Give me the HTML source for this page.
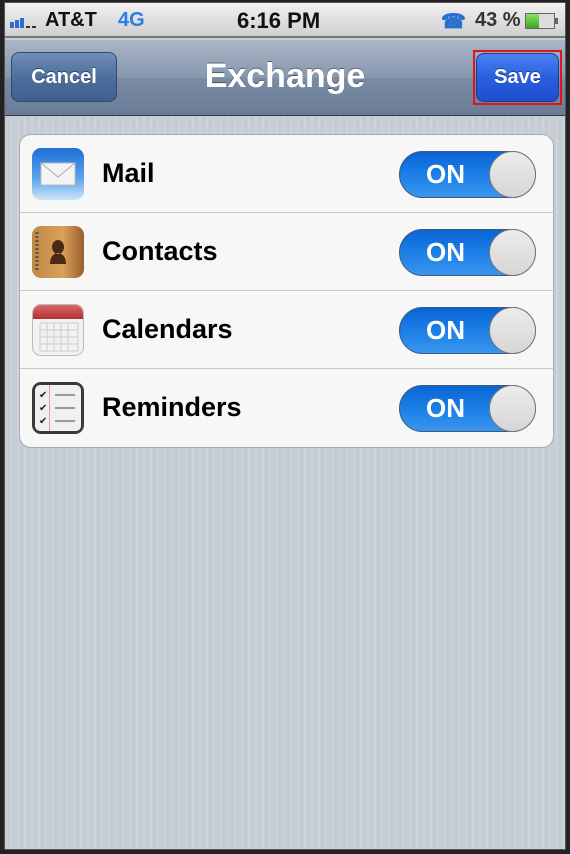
<!DOCTYPE html>
<html><head><style>
*{margin:0;padding:0;box-sizing:border-box}
body{width:570px;height:854px;background:#222;position:relative;overflow:hidden;font-family:"Liberation Sans",sans-serif}
#scr{position:absolute;left:4px;top:2px;width:562px;height:848px;background:repeating-linear-gradient(90deg,#c5ccd4 0 5px,#cbd2d9 5px 7px);border:1px solid #555}
#sb{position:absolute;left:0;top:0;width:100%;height:35px;background:linear-gradient(#f0f0f0,#d0d0d0);border-bottom:2px solid #777;font-weight:bold;font-size:20px;color:#111}
#nav{position:absolute;left:0;top:37px;width:100%;height:76px;background:linear-gradient(#aab6c6,#8797ae 50%,#7a8ca5 51%,#6a7c96);border-bottom:1px solid #2d3642}
.btn{position:absolute;top:12px;height:50px;border-radius:8px;color:#fff;font-weight:bold;font-size:20px;display:flex;align-items:center;justify-content:center;text-shadow:0 -1px 0 rgba(0,0,0,.4)}
#grp{position:absolute;left:14px;top:131px;width:535px;height:314px;background:#f7f7f7;border:1px solid #a9abad;border-radius:12px;overflow:hidden}
.row{height:78px;border-bottom:1px solid #c8c8c8;position:relative}
.row:last-child{border-bottom:none}
.row span{position:absolute;left:82px;top:23px;font-size:27px;font-weight:bold;color:#000}
.ic{position:absolute;left:12px;top:13px;width:52px;height:52px;border-radius:9px;overflow:hidden}
.tg{position:absolute;left:379px;top:16px;width:137px;height:47px;border-radius:24px;background:linear-gradient(#0a64d4,#1b7fe6 50%,#3a95ef);border:1px solid #3a5a80}
.tg b{position:absolute;left:26px;top:7px;color:#fff;font-size:26px}
.tg i{position:absolute;right:-1px;top:-1px;width:47px;height:47px;border-radius:50%;background:linear-gradient(#ececec,#d6d6d6);border:1px solid #777}
</style></head><body>
<div id="scr">
<div id="sb">
 <svg style="position:absolute;left:5px;top:12px" width="36" height="14"><rect x="0" y="7" width="4" height="6" fill="#2a6fd0"/><rect x="5" y="5" width="4" height="8" fill="#2a6fd0"/><rect x="10" y="3" width="4" height="10" fill="#2a6fd0"/><rect x="16" y="11" width="4" height="2" fill="#333"/><rect x="22" y="11" width="4" height="2" fill="#333"/></svg>
 <span style="position:absolute;left:40px;top:6px">AT&amp;T</span>
 <span style="position:absolute;left:113px;top:6px;color:#2a7ee8">4G</span>
 <span style="position:absolute;left:232px;top:5px;font-size:22px">6:16 PM</span>
 <span style="position:absolute;left:436px;top:6px;color:#2a6fd0">☎</span>
 <span style="position:absolute;left:470px;top:6px;color:#333">43 %</span>
 <div style="position:absolute;left:520px;top:10px;width:30px;height:16px;border:1px solid #666;background:#ddd"><div style="width:13px;height:100%;background:linear-gradient(#8be06a,#3ca81c)"></div></div>
 <div style="position:absolute;left:550px;top:15px;width:3px;height:6px;background:#666"></div>
</div>
<div id="nav">
 <div class="btn" style="left:6px;width:106px;background:linear-gradient(#6f8fb8,#4e6e9c 50%,#3f5f8f);border:1px solid #34496b">Cancel</div>
 <div style="position:absolute;left:0;width:100%;top:17px;text-align:center;color:#fff;font-weight:bold;font-size:34px;text-shadow:0 -1px 0 rgba(0,0,0,.4)">Exchange</div>
 <div style="position:absolute;left:468px;top:10px;width:89px;height:55px;border:2px solid #e0141c"></div>
 <div class="btn" style="left:471px;top:13px;width:83px;height:49px;background:linear-gradient(#4a82f0,#2a5fdc 50%,#1d4fce);border:1px solid #1c3c8a">Save</div>
</div>
<div id="grp">
 <div class="row"><div class="ic" style="background:linear-gradient(#1d6fd6,#5ea6ec 60%,#cfe6f8)"><svg width="52" height="52"><rect x="9" y="15" width="34" height="22" fill="#f4f4f4" stroke="#bbb"/><path d="M9 15 L26 29 L43 15" fill="none" stroke="#aaa"/></svg></div><span>Mail</span><div class="tg"><b>ON</b><i></i></div></div>
 <div class="row"><div class="ic" style="background:linear-gradient(90deg,#c08844,#d9a159 60%,#9a5e2c)"><svg width="52" height="52"><path d="M18 38 Q18 28 26 27 Q34 28 34 38Z M26 14 a6 7 0 1 0 0.1 0" fill="#4a2a14"/><line x1="5" y1="6" x2="5" y2="46" stroke="#555" stroke-width="3" stroke-dasharray="2 2"/></svg></div><span>Contacts</span><div class="tg"><b>ON</b><i></i></div></div>
 <div class="row"><div class="ic" style="background:#f2f2f2;border:1px solid #bbb"><div style="height:14px;background:linear-gradient(#d86a6a,#b52f2f)"></div><svg width="52" height="38"><g stroke="#ccc"><path d="M7 4H45M7 11H45M7 18H45M7 25H45M7 32H45M7 4V32M14 4V32M21 4V32M28 4V32M35 4V32M45 4V32"/></g></svg></div><span>Calendars</span><div class="tg"><b>ON</b><i></i></div></div>
 <div class="row"><div class="ic" style="background:#3a3a3a;padding:3px"><div style="width:46px;height:46px;background:#f0f0f0;border-radius:5px;position:relative;font-size:10px;line-height:13px;padding:4px 0 0 4px;color:#222">✔<br>✔<br>✔<div style="position:absolute;left:14px;top:0;width:1px;height:46px;background:#e99"></div><div style="position:absolute;left:20px;top:9px;width:20px;height:2px;background:#999;box-shadow:0 13px 0 #999,0 26px 0 #999"></div></div></div><span>Reminders</span><div class="tg"><b>ON</b><i></i></div></div>
</div>
</div>
</body></html>
